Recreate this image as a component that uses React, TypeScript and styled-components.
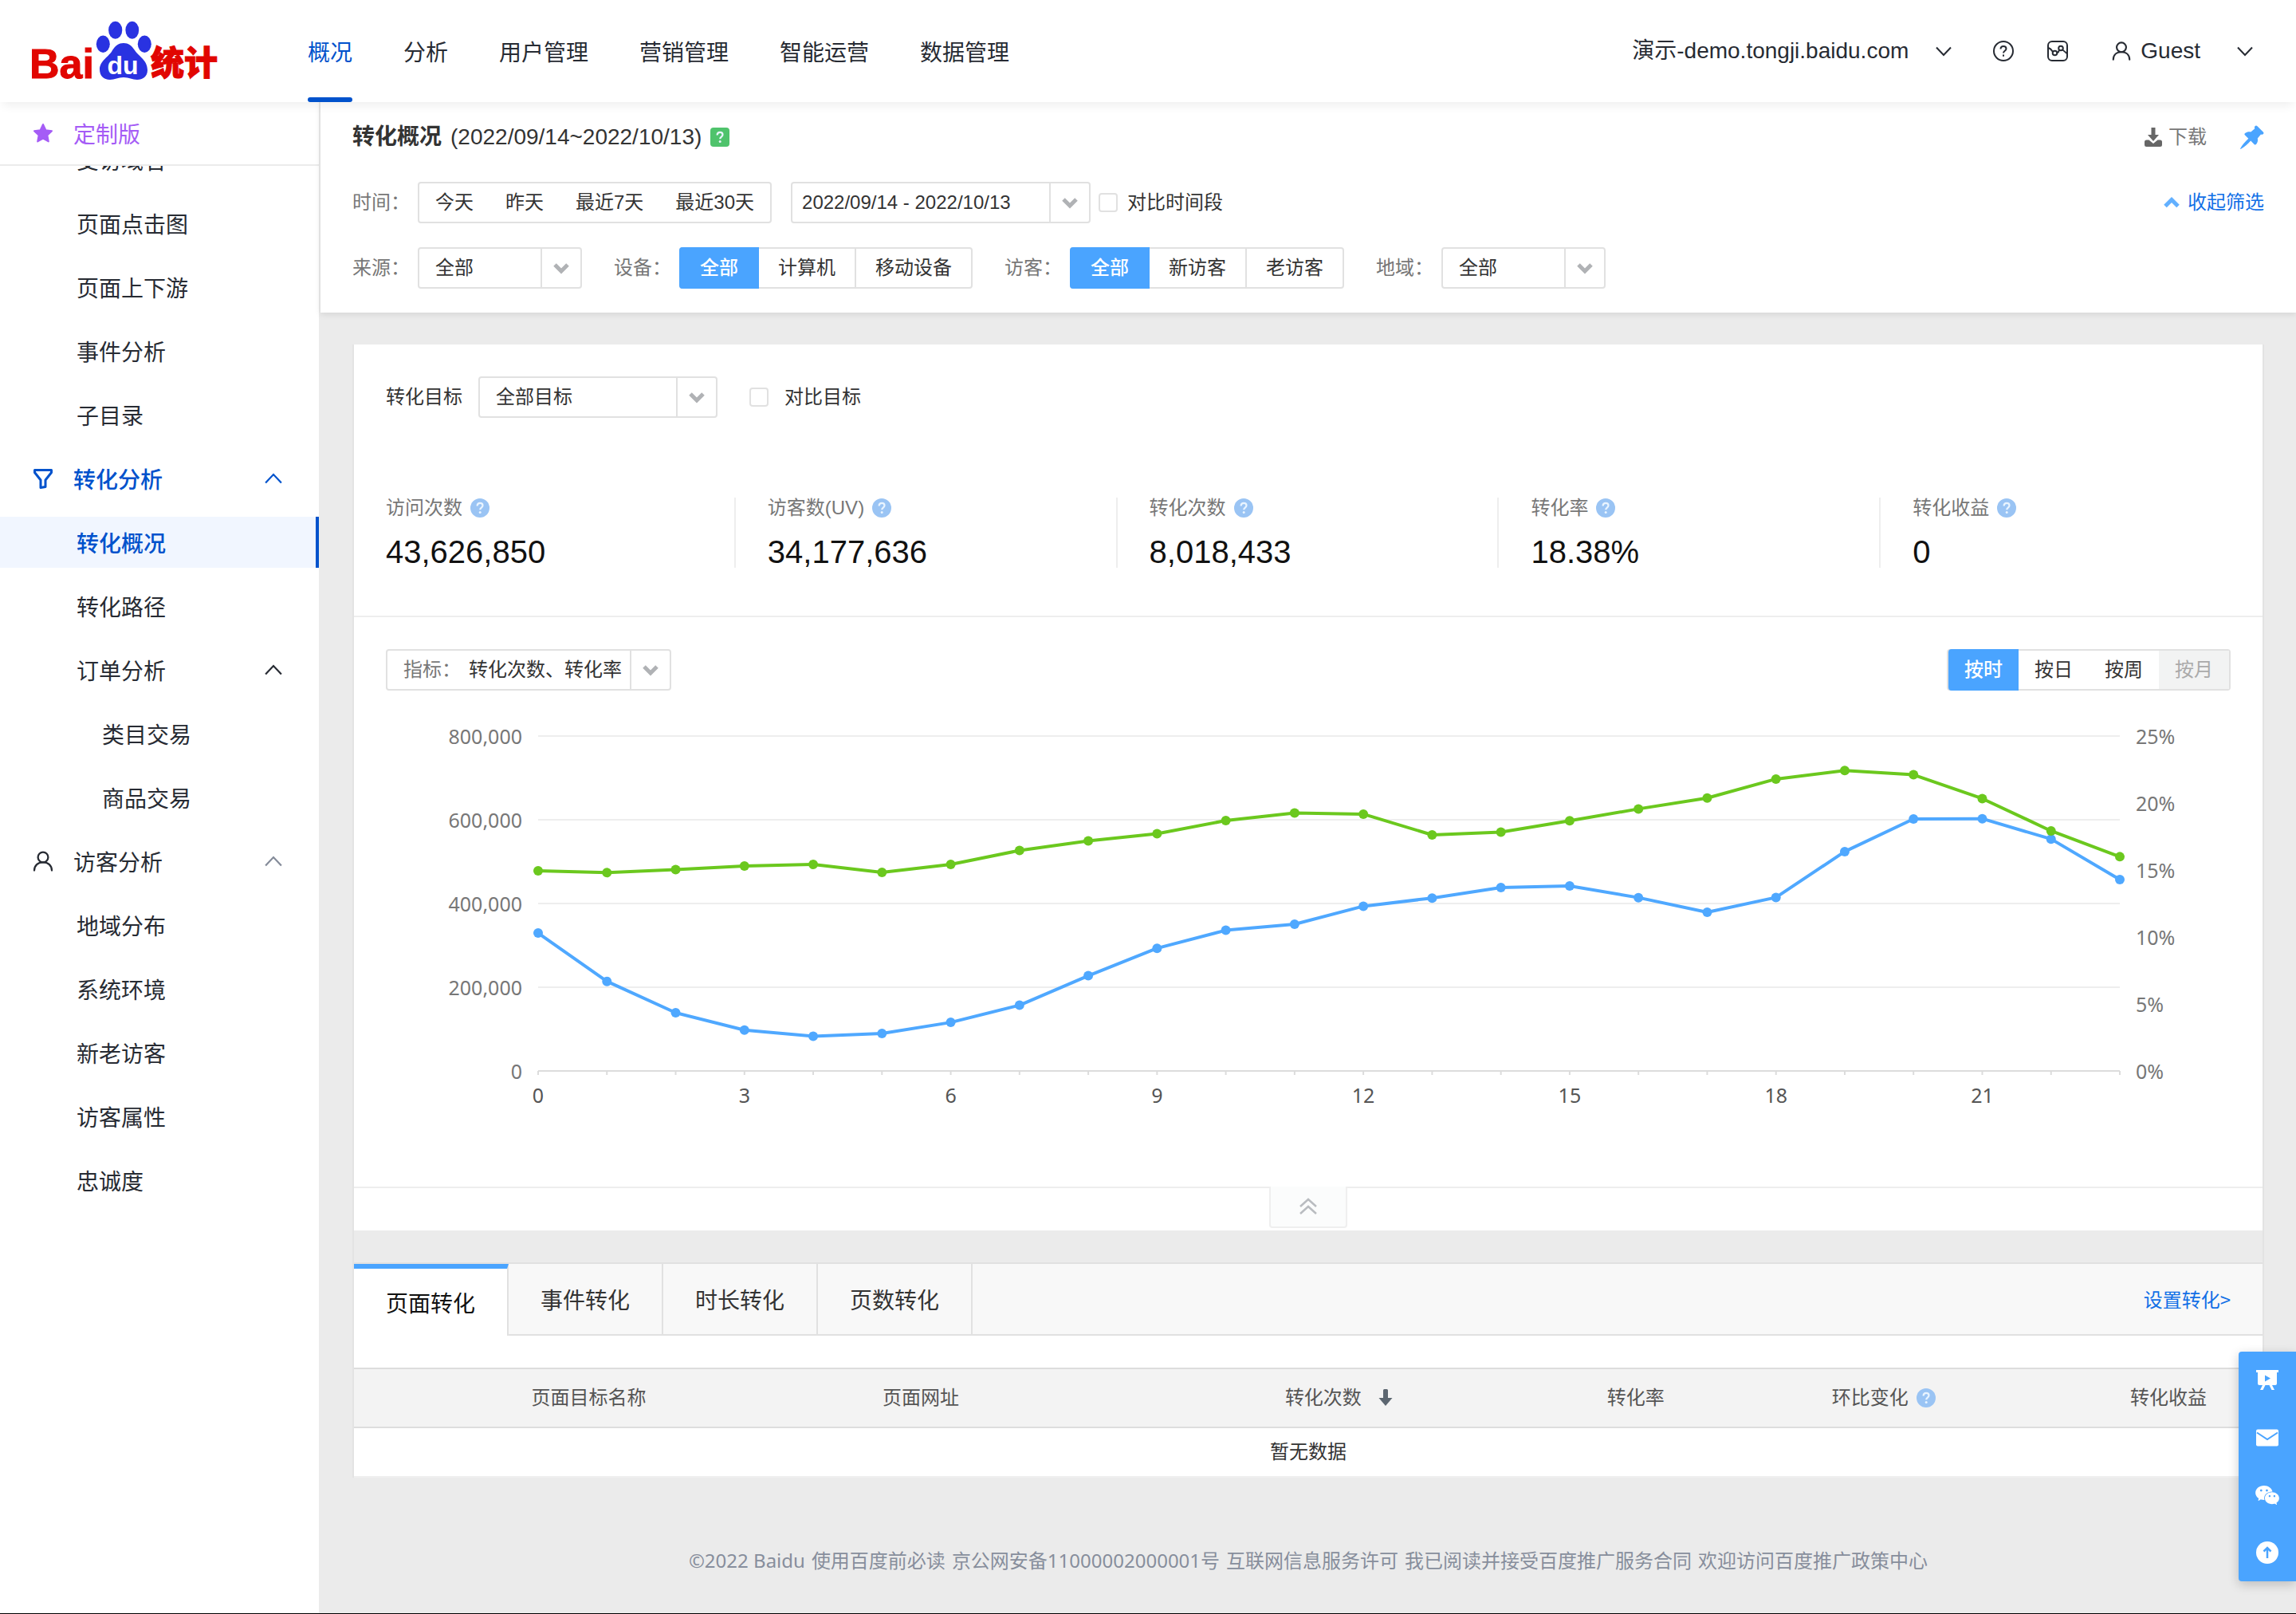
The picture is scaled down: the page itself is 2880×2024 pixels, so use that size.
import React, { useState } from "react";
import styled, { createGlobalStyle, css } from "styled-components";
import { AiFillWechat } from "react-icons/ai";

const c = {
  ink: "#272b33",
  text: "#333",
  muted: "#777",
  line: "#e1e1e1",
  hair: "#eee",
  blue: "#4aa4ff",
  navy: "#0052cc",
  link: "#116fe6",
  page: "#ebebeb",
};

const sans = `"Liberation Sans", "Noto Sans CJK SC", sans-serif`;
const hanzi = `"Noto Sans CJK SC", sans-serif`;
const humanist = `"Noto Sans", "Noto Sans CJK SC", sans-serif`;

const GlobalStyle = createGlobalStyle`
  *, *::before, *::after { box-sizing: border-box; }
  body {
    margin: 0;
    background: ${c.page};
    color: ${c.text};
    font: 24px/32px ${sans};
  }
  button, select, input { font: inherit; color: inherit; margin: 0; }
  button { padding: 0; border: 0; background: none; cursor: pointer; white-space: nowrap; }
  a { color: inherit; text-decoration: none; }
  ul { list-style: none; margin: 0; padding: 0; }
  svg { display: block; flex: none; }
`;

/* ---------- shell ---------- */

const Page = styled.div`
  min-height: 100vh;
  display: flex;
  flex-direction: column;
  border-bottom: 1px solid #000;
`;

const Header = styled.header`
  position: relative;
  z-index: 2;
  display: flex;
  align-items: stretch;
  height: 128px;
  padding: 0 54px 0 20px;
  background: #fff;
  color: ${c.ink};
  font-size: 28px;
  box-shadow: 0 8px 12px -4px rgba(0, 0, 0, 0.07);
`;

const LogoLink = styled.a`
  width: 366px;
  padding-top: 10px;
`;

const Nav = styled.nav`
  flex: 1;
  display: flex;
  gap: 64px;
  font-family: ${hanzi};
`;

const NavLink = styled.a<{ $active?: boolean }>`
  display: flex;
  flex-direction: column;
  line-height: 128px;
  white-space: nowrap;
  color: ${(p) => (p.$active ? c.navy : "inherit")};
  &::after {
    content: "";
    height: 6px;
    margin-top: -6px;
    border-radius: 3px;
    background: ${(p) => (p.$active ? c.navy : "transparent")};
  }
`;

const Tools = styled.div`
  display: flex;
  align-items: center;
`;

const SiteButton = styled.button`
  display: flex;
  align-items: center;
  gap: 34px;
  margin-right: 52px;
`;

const IconButton = styled.button`
  margin-right: 42px;
`;

const UserButton = styled.button`
  display: flex;
  align-items: center;
  gap: 11px;
  margin-left: 12px;
  & > span { margin-right: 35px; }
`;

const Body = styled.div`
  flex: 1;
  display: flex;
`;

/* ---------- sidebar ---------- */

const Sidebar = styled.aside`
  flex: none;
  width: 402px;
  border-right: 2px solid ${c.page};
  background: #fff;
  color: ${c.ink};
  font-family: ${hanzi};
  font-size: 28px;
`;

const CustomLink = styled.a`
  display: flex;
  align-items: center;
  gap: 24px;
  height: 80px;
  padding-left: 40px;
  border-bottom: 2px solid ${c.page};
  color: #a55cf6;
`;

const MenuViewport = styled.div`
  overflow: hidden;
`;

const Menu = styled.ul`
  display: grid;
  gap: 16px;
  margin-top: -40px;
`;

type Level = "group" | "item" | "sub";
const indent: Record<Level, number> = { group: 40, item: 96, sub: 128 };

const MenuLink = styled.a<{ $level: Level; $tone?: "open" | "current" }>`
  display: flex;
  align-items: center;
  gap: 24px;
  height: 64px;
  padding: 0 42px 0 ${(p) => indent[p.$level]}px;
  border-right: 4px solid transparent;
  & > span { flex: 1; }
  ${(p) =>
    p.$tone &&
    css`
      color: ${c.navy};
      font-weight: 500;
    `}
  ${(p) =>
    p.$tone === "current" &&
    css`
      background: #f1f6ff;
      border-right-color: ${c.navy};
    `}
`;

/* ---------- filters ---------- */

const Main = styled.main`
  flex: 1;
  min-width: 0;
`;

const Filters = styled.section`
  padding: 0 40px 30px;
  background: #fff;
  box-shadow: 0 2px 8px rgba(0, 0, 0, 0.1);
`;

const TitleRow = styled.div`
  display: flex;
  align-items: center;
  height: 88px;
  margin-bottom: 12px;
  font-size: 28px;
`;

const Title = styled.h1`
  flex: 1;
  display: flex;
  align-items: center;
  gap: 11px;
  margin: 0;
  font-size: 28px;
  font-weight: 400;
  & > strong { font-weight: 600; }
`;

const Download = styled.button`
  display: flex;
  align-items: center;
  gap: 8px;
  margin-right: 42px;
  color: ${c.muted};
  font-size: 24px;
`;

const FilterRow = styled.div`
  display: flex;
  flex-wrap: wrap;
  align-items: center;
  gap: 24px;
  & + & { margin-top: 30px; gap: 40px; }
`;

const Field = styled.div`
  display: flex;
  align-items: center;
  gap: 10px;
`;

const FieldLabel = styled.label`
  color: ${c.muted};
  white-space: nowrap;
`;

const frame = css`
  height: 52px;
  border: 2px solid ${c.line};
  border-radius: 4px;
  background: #fff;
`;

const QuickRange = styled.div`
  ${frame}
  display: flex;
  & > button { padding: 0 20px; }
`;

const Segments = styled.div`
  ${frame}
  display: flex;
  & > button { padding: 0 24px; }
  & > button + button + button { border-left: 2px solid ${c.line}; }
`;

const Periods = styled.div`
  ${frame}
  display: flex;
  & > button { padding: 0 20px; }
`;

const Segment = styled.button<{ $on?: boolean }>`
  ${(p) =>
    p.$on &&
    css`
      margin: -2px 0 -2px -2px;
      border: solid ${c.blue};
      border-width: 0 2px;
      border-radius: 4px 0 0 4px;
      background: ${c.blue};
      color: #fff;
      font-weight: 500;
    `}
  &:disabled {
    background: #f2f3f3;
    color: #aaa;
  }
`;

const Period = styled(Segment)`
  ${(p) => p.$on && css`border: 0; margin-left: 0;`}
`;

const Combo = styled.div<{ $width: number }>`
  ${frame}
  display: inline-grid;
  grid-template-columns: 1fr;
  width: ${(p) => p.$width}px;
  & > * { grid-area: 1 / 1; }
  & > select {
    appearance: none;
    width: 100%;
    padding: 0 50px 0 20px;
    border: 0;
    background: none;
  }
`;

const ComboArrow = styled.span`
  justify-self: end;
  display: grid;
  place-items: center;
  width: 50px;
  border-left: 2px solid ${c.line};
  pointer-events: none;
`;

const PickerButton = styled.button<{ $gap: number }>`
  ${frame}
  display: flex;
  align-items: stretch;
  padding-left: ${(p) => p.$gap}px;
  line-height: 48px;
  & > em { font-style: normal; color: ${c.muted}; margin-right: 10px; }
`;

const PickerText = styled.span<{ $width: number }>`
  width: ${(p) => p.$width}px;
  text-align: left;
`;

const RangeGroup = styled.div`
  display: flex;
  align-items: center;
  gap: 10px;
`;

const CheckLabel = styled.label<{ $gap: number }>`
  display: flex;
  align-items: center;
  gap: ${(p) => p.$gap}px;
  white-space: nowrap;
`;

const Checkbox = styled.input.attrs({ type: "checkbox" })`
  appearance: none;
  width: 24px;
  height: 24px;
  border: 2px solid ${c.line};
  border-radius: 4px;
  background: #fff;
  &:checked { background: ${c.blue}; border-color: ${c.blue}; }
`;

const CollapseFilters = styled.button`
  display: flex;
  align-items: center;
  gap: 10px;
  margin-left: auto;
  color: ${c.link};
`;

/* ---------- report ---------- */

const Report = styled.div`
  margin: 40px 40px 0;
  border: solid #e3e3e3;
  border-width: 0 2px;
`;

const Overview = styled.section`
  background: #fff;
`;

const GoalRow = styled.div`
  display: flex;
  align-items: center;
  gap: 20px;
  padding: 40px 40px 100px;
  & > label:last-child { margin-left: 20px; }
`;

const Stats = styled.div`
  display: grid;
  grid-template-columns: repeat(5, 1fr);
  padding-bottom: 60px;
  border-bottom: 2px solid ${c.hair};
`;

const Stat = styled.div`
  display: grid;
  gap: 22px;
  padding-left: 40px;
  border-right: 2px solid ${c.hair};
  &:last-child { border-right: 0; }
`;

const StatLabel = styled.div`
  display: flex;
  align-items: center;
  gap: 10px;
  height: 26px;
  color: ${c.muted};
`;

const StatValue = styled.div`
  color: #111;
  font-size: 40px;
  line-height: 40px;
`;

const ChartBar = styled.div`
  display: flex;
  justify-content: space-between;
  padding: 40px 40px 0;
`;

const ChartWrap = styled.div`
  padding: 0 40px;
  border-bottom: 2px solid ${c.hair};
  & > svg { width: 100%; height: auto; }
  & text { font: 25px ${humanist}; fill: ${c.muted}; }
  & text.hour { fill: #555; }
`;

const FoldStrip = styled.div`
  display: flex;
  justify-content: center;
  height: 53px;
`;

const FoldButton = styled.button`
  display: grid;
  place-items: center;
  width: 98px;
  height: 52px;
  margin-top: -2px;
  border: 2px solid #efefef;
  border-top: 0;
  border-radius: 0 0 4px 4px;
  background: #fbfcfc;
`;

const Tabs = styled.div`
  display: flex;
  height: 92px;
  margin-top: 40px;
  border: solid ${c.line};
  border-width: 2px 0;
  background: #f8f8f8;
  font-family: ${hanzi};
`;

const Tab = styled.button<{ $active?: boolean }>`
  padding: 0 40px;
  border-right: 2px solid ${c.line};
  font-size: 28px;
  ${(p) =>
    p.$active &&
    css`
      margin-bottom: -2px;
      border-top: 6px solid ${c.blue};
      background: #fff;
      color: #111;
    `}
`;

const SetupLink = styled.a`
  margin: auto 40px auto auto;
  color: ${c.link};
`;

const TableWrap = styled.div`
  padding-top: 40px;
  background: #fff;
`;

const Table = styled.table`
  width: 100%;
  table-layout: fixed;
  border-collapse: separate;
  border-spacing: 0;
  th {
    height: 76px;
    padding: 0 20px;
    border: solid #ddd;
    border-width: 2px 0;
    background: #f3f3f3;
    color: #555;
    font-weight: 400;
  }
  th:last-child { padding-right: 70px; }
  td {
    height: 62px;
    padding: 0;
    border-bottom: 2px solid #efefef;
    text-align: center;
  }
`;

const Head = styled.div<{ $end?: boolean }>`
  display: flex;
  align-items: center;
  justify-content: ${(p) => (p.$end ? "flex-end" : "center")};
  gap: ${(p) => (p.$end ? 10 : 0)}px;
`;

const SortButton = styled.button`
  display: flex;
  align-items: center;
  gap: 20px;
`;

const Footer = styled.footer`
  display: flex;
  flex-wrap: wrap;
  justify-content: center;
  gap: 8px;
  padding: 88px 40px 48px;
  color: #878e9c;
  font-family: ${humanist};
`;

const Dock = styled.div`
  position: fixed;
  z-index: 3;
  right: 0;
  bottom: 41px;
  width: 72px;
  border-radius: 4px 0 0 4px;
  background: ${c.blue};
  color: #fff;
  box-shadow: 0 4px 14px rgba(0, 0, 0, 0.2);
  & > button {
    display: grid;
    place-items: center;
    width: 72px;
    height: 72px;
  }
`;

/* ---------- icons ---------- */

const Chevron = ({ up, size = 20, color = "currentColor" }: { up?: boolean; size?: number; color?: string }) => (
  <svg width={size} height={size} viewBox="0 0 20 20" fill="none" stroke={color} strokeWidth="2" aria-hidden="true">
    <path d={up ? "M1 15 10 5.5 19 15" : "M1 5.5 10 15 19 5.5"} />
  </svg>
);

const Caret = ({ up, color = "#b0b2b5" }: { up?: boolean; color?: string }) => (
  <svg width="20" height="20" viewBox="0 0 20 20" fill="none" stroke={color} strokeWidth="5" aria-hidden="true">
    <path d={up ? "M2 14.5 10 6.5 18 14.5" : "M2 6 10 14 18 6"} />
  </svg>
);

const Hint = ({ square }: { square?: boolean }) => (
  <svg width="24" height="24" viewBox="0 0 24 24" aria-hidden="true">
    {square ? <rect width="24" height="24" rx="4" fill="#4fc36c" /> : <circle cx="12" cy="12" r="12" fill="#9ac4f4" />}
    <path d="M8.6 9.4c0-2.2 1.4-3.6 3.5-3.6s3.4 1.2 3.4 3.1c0 2.6-3.3 2.8-3.3 5.3" fill="none" stroke="#e9f4ff" strokeWidth="2.2" />
    <circle cx="12.2" cy="17.6" r="1.5" fill="#e9f4ff" />
  </svg>
);

const Person = ({ size }: { size: number }) => (
  <svg width={size} height={size} viewBox="0 0 28 28" fill="none" stroke="currentColor" strokeWidth="2.3" strokeLinecap="round" aria-hidden="true">
    <circle cx="14" cy="9" r="6.400" />
    <path d="M3 25.500C3.200 19.500 7.400 15.400 14 15.400s10.800 4.100 11 10.100" />
  </svg>
);

const Logo = () => (
  <svg width="270" height="110" viewBox="0 0 270 110" role="img" aria-label="Baidu 统计">
    <g fill="#2932e1">
      <ellipse cx="124.700" cy="27.700" rx="8.600" ry="11" />
      <ellipse cx="145.800" cy="27.700" rx="8.400" ry="11" />
      <ellipse cx="109.300" cy="45.300" rx="8.500" ry="10.700" />
      <ellipse cx="161.300" cy="45.300" rx="8.500" ry="10.700" />
      <path d="M135 44c6 0 10 3 14 9 4 7 16 12 16 25 0 8-6 12-13 12-6 0-10-3-17-3s-11 3-17 3c-8 0-13-5-13-13 0-11 12-16 16-24 4-6 8-9 14-9Z" />
    </g>
    <g fill="#e10601" stroke="#e10601" strokeWidth="1" fontWeight="700">
      <text x="17" y="88" fontSize="52" fontFamily="Liberation Sans, sans-serif">Bai</text>
      <text x="169" y="84" fontSize="42" fontWeight="900" fontFamily="Noto Sans CJK SC, sans-serif">统计</text>
    </g>
    <text x="134" y="83" textAnchor="middle" fill="#fff" fontSize="32" fontWeight="700" fontFamily="Liberation Sans, sans-serif">du</text>
  </svg>
);

/* ---------- chart ---------- */

const conversions = [329.5, 214, 139, 97.5, 83, 89.5, 116, 157, 227.5, 293, 336, 350.5, 393.5, 413, 438, 442, 414, 379, 414.5, 524, 602, 602.5, 554, 457];
const rates = [14.94, 14.8, 15.03, 15.3, 15.42, 14.82, 15.42, 16.46, 17.17, 17.71, 18.69, 19.26, 19.17, 17.62, 17.83, 18.67, 19.56, 20.37, 21.79, 22.43, 22.11, 20.33, 17.92, 15.99];

const plot = { left: 191, right: 2175, top: 57, bottom: 477 };
const px = (i: number) => plot.left + (i * (plot.right - plot.left)) / 23;
const py = (v: number, max: number) => plot.bottom - (v / max) * (plot.bottom - plot.top);

const Series = ({ data, max, color }: { data: number[]; max: number; color: string }) => (
  <g>
    <polyline points={data.map((v, i) => `${px(i)},${py(v, max)}`).join(" ")} fill="none" stroke={color} strokeWidth="4" strokeLinejoin="round" />
    {data.map((v, i) => (
      <circle key={i} cx={px(i)} cy={py(v, max)} r="6" fill={color} />
    ))}
  </g>
);

const TrendChart = () => (
  <svg viewBox="0 0 2314 622" role="img" aria-label="转化次数、转化率">
    {[800, 600, 400, 200, 0].map((v) => (
      <g key={v}>
        <line x1={plot.left} x2={plot.right} y1={py(v, 800)} y2={py(v, 800)} stroke={v ? "#eee" : "#dcdcdc"} strokeWidth="2" />
        <text x={171} y={py(v, 800) + 10} textAnchor="end">{v ? `${v},000` : "0"}</text>
      </g>
    ))}
    {[25, 20, 15, 10, 5, 0].map((v) => (
      <text key={v} x={2195} y={py(v, 25) + 10}>{v}%</text>
    ))}
    {conversions.map((_, i) => (
      <line key={i} x1={px(i)} x2={px(i)} y1={plot.bottom} y2={plot.bottom + 5} stroke="#dcdcdc" strokeWidth="2" />
    ))}
    {[0, 3, 6, 9, 12, 15, 18, 21].map((h) => (
      <text key={h} className="hour" x={px(h)} y={517} textAnchor="middle">{h}</text>
    ))}
    <Series data={conversions} max={800} color="#4fa8ff" />
    <Series data={rates} max={25} color="#6bc81e" />
  </svg>
);

/* ---------- content ---------- */

const navItems = ["概况", "分析", "用户管理", "营销管理", "智能运营", "数据管理"];

type Entry = { text: string; level: Level; icon?: React.ReactNode; tone?: "open" | "current"; arrow?: string };

const Funnel = (
  <svg width="28" height="28" viewBox="0 0 28 28" fill="none" stroke="currentColor" strokeWidth="3" strokeLinejoin="round" aria-hidden="true">
    <path d="M3.500 3.500h21v3L17 16v8.500l-6 1V16L3.500 6.500Z" />
  </svg>
);

const entries: Entry[] = [
  { text: "受访域名", level: "item" },
  { text: "页面点击图", level: "item" },
  { text: "页面上下游", level: "item" },
  { text: "事件分析", level: "item" },
  { text: "子目录", level: "item" },
  { text: "转化分析", level: "group", icon: Funnel, tone: "open", arrow: c.navy },
  { text: "转化概况", level: "item", tone: "current" },
  { text: "转化路径", level: "item" },
  { text: "订单分析", level: "item", arrow: c.ink },
  { text: "类目交易", level: "sub" },
  { text: "商品交易", level: "sub" },
  { text: "访客分析", level: "group", icon: <Person size={28} />, arrow: "#848b99" },
  { text: "地域分布", level: "item" },
  { text: "系统环境", level: "item" },
  { text: "新老访客", level: "item" },
  { text: "访客属性", level: "item" },
  { text: "忠诚度", level: "item" },
];

const stats = [
  ["访问次数", "43,626,850"],
  ["访客数(UV)", "34,177,636"],
  ["转化次数", "8,018,433"],
  ["转化率", "18.38%"],
  ["转化收益", "0"],
];

const footerLinks = ["使用百度前必读", "京公网安备11000002000001号", "互联网信息服务许可", "我已阅读并接受百度推广服务合同", "欢迎访问百度推广政策中心"];

const DropDown = ({ id, width, value }: { id: string; width: number; value: string }) => (
  <Combo $width={width}>
    <select id={id} defaultValue={value}>
      <option>{value}</option>
    </select>
    <ComboArrow><Caret /></ComboArrow>
  </Combo>
);

const Choice = ({ options }: { options: string[] }) => {
  const [on, setOn] = useState(0);
  return (
    <Segments>
      {options.map((o, i) => (
        <Segment key={o} type="button" $on={i === on} aria-pressed={i === on} onClick={() => setOn(i)}>{o}</Segment>
      ))}
    </Segments>
  );
};

export default function App() {
  const [tab, setTab] = useState("页面转化");
  return (
    <Page>
      <GlobalStyle />
      <Header>
        <LogoLink href="#"><Logo /></LogoLink>
        <Nav>
          {navItems.map((n, i) => (
            <NavLink key={n} href="#" $active={i === 0}>{n}</NavLink>
          ))}
        </Nav>
        <Tools>
          <SiteButton type="button">演示-demo.tongji.baidu.com <Chevron /></SiteButton>
          <IconButton type="button" aria-label="帮助">
            <svg width="26" height="26" viewBox="0 0 26 26" fill="none" stroke="currentColor" strokeWidth="2">
              <circle cx="13" cy="13" r="12" />
              <path d="M9.500 10.500C9.500 8.400 11 7 13 7s3.500 1.300 3.500 3.200c0 2.500-3.500 2.700-3.500 5.300" />
              <path d="M13 17.500v2.300" />
            </svg>
          </IconButton>
          <IconButton type="button" aria-label="数据监控">
            <svg width="26" height="26" viewBox="0 0 26 26" fill="none" stroke="currentColor" strokeWidth="2">
              <rect x="1" y="1" width="24" height="24" rx="5" />
              <circle cx="9.500" cy="15.500" r="2.800" />
              <circle cx="17" cy="9.500" r="2.800" />
              <path d="M1.500 9c2 .6 3.600 2 5.300 4.800M12.300 15.300c1.600-.6 2.400-1.600 2.700-3.600M19 11.500c1.600.9 2.900 2.100 5.500 4.500" />
            </svg>
          </IconButton>
          <UserButton type="button"><Person size={26} /><span>Guest</span><Chevron /></UserButton>
        </Tools>
      </Header>

      <Body>
        <Sidebar>
          <CustomLink href="#">
            <svg width="28" height="28" viewBox="-1 -1 28 28" fill="currentColor" stroke="currentColor" strokeWidth="2" strokeLinejoin="round" aria-hidden="true">
              <path d="m13 2 3.400 7.200 7.600 1-5.600 5.400 1.400 7.800L13 19.600l-6.800 3.800 1.400-7.800L2 10.200l7.600-1Z" />
            </svg>
            定制版
          </CustomLink>
          <MenuViewport>
            <Menu>
              {entries.map((e) => (
                <li key={e.text}>
                  <MenuLink href="#" $level={e.level} $tone={e.tone}>
                    {e.icon}
                    <span>{e.text}</span>
                    {e.arrow && <Chevron up size={22} color={e.arrow} />}
                  </MenuLink>
                </li>
              ))}
            </Menu>
          </MenuViewport>
        </Sidebar>

        <Main>
          <Filters>
            <TitleRow>
              <Title><strong>转化概况</strong><span>(2022/09/14~2022/10/13)</span><Hint square /></Title>
              <Download type="button">
                <svg width="22" height="24" viewBox="0 0 22 24" fill="#666" aria-hidden="true">
                  <path d="M8.500 0h5v9h4.500l-7 8-7-8h4.500Z" />
                  <path d="M2.500 15.500h3l5.500 4.500 5.500-4.500h3a2.500 2.500 0 0 1 2.500 2.500v3.500a2.500 2.500 0 0 1-2.500 2.500h-17A2.500 2.500 0 0 1 0 21.500V18a2.500 2.500 0 0 1 2.500-2.500Z" />
                </svg>
                下载
              </Download>
              <button type="button" aria-label="固定筛选">
                <svg width="30" height="30" viewBox="0 0 30 30" fill={c.blue} aria-hidden="true">
                  <path d="M18.500 1.200c1-1 2-1 3 0l7.300 7.300c1 1 .8 2-.2 2.800-1 .6-1.800.6-2.600.3l-4.200 5c.6 2.600.2 5-1.600 7.200-.8 1-1.800 1-2.600.1l-4.400-4.400C9.500 23.500 5.500 27.500.6 30L0 29.400c2.500-4.900 6.300-8.900 10.300-12.700L6 12.400c-.9-.8-.8-1.800.2-2.500 2.200-1.700 4.600-2 7.100-1.500l5-4.200c-.4-1-.5-2 .2-3Z" />
                </svg>
              </button>
            </TitleRow>
            <FilterRow>
              <Field>
                <FieldLabel as="span">时间：</FieldLabel>
                <QuickRange>
                  {["今天", "昨天", "最近7天", "最近30天"].map((r) => (
                    <button key={r} type="button">{r}</button>
                  ))}
                </QuickRange>
              </Field>
              <RangeGroup>
                <PickerButton type="button" $gap={12}>
                  <PickerText $width={310}>2022/09/14 - 2022/10/13</PickerText>
                  <ComboArrow><Caret /></ComboArrow>
                </PickerButton>
                <CheckLabel $gap={12}><Checkbox />对比时间段</CheckLabel>
              </RangeGroup>
              <CollapseFilters type="button"><Caret up color="#62b0ff" />收起筛选</CollapseFilters>
            </FilterRow>
            <FilterRow>
              <Field>
                <FieldLabel htmlFor="source">来源：</FieldLabel>
                <DropDown id="source" width={206} value="全部" />
              </Field>
              <Field>
                <FieldLabel as="span">设备：</FieldLabel>
                <Choice options={["全部", "计算机", "移动设备"]} />
              </Field>
              <Field>
                <FieldLabel as="span">访客：</FieldLabel>
                <Choice options={["全部", "新访客", "老访客"]} />
              </Field>
              <Field>
                <FieldLabel htmlFor="region">地域：</FieldLabel>
                <DropDown id="region" width={206} value="全部" />
              </Field>
            </FilterRow>
          </Filters>

          <Report>
            <Overview>
              <GoalRow>
                <label htmlFor="goal">转化目标</label>
                <DropDown id="goal" width={300} value="全部目标" />
                <CheckLabel $gap={20}><Checkbox />对比目标</CheckLabel>
              </GoalRow>
              <Stats>
                {stats.map(([label, value]) => (
                  <Stat key={label}>
                    <StatLabel>{label}<Hint /></StatLabel>
                    <StatValue>{value}</StatValue>
                  </Stat>
                ))}
              </Stats>
              <ChartBar>
                <PickerButton type="button" $gap={20}>
                  <em>指标：</em>
                  <PickerText $width={202}>转化次数、转化率</PickerText>
                  <ComboArrow><Caret /></ComboArrow>
                </PickerButton>
                <Periods>
                  <Period type="button" $on>按时</Period>
                  <Period type="button">按日</Period>
                  <Period type="button">按周</Period>
                  <Period type="button" disabled>按月</Period>
                </Periods>
              </ChartBar>
              <ChartWrap><TrendChart /></ChartWrap>
              <FoldStrip>
                <FoldButton type="button" aria-label="收起图表">
                  <svg width="24" height="24" viewBox="0 0 24 24" fill="none" stroke="#b9bcc0" strokeWidth="2.500">
                    <path d="M2 12 12 3l10 9M2 21l10-9 10 9" />
                  </svg>
                </FoldButton>
              </FoldStrip>
            </Overview>

            <Tabs>
              {["页面转化", "事件转化", "时长转化", "页数转化"].map((t) => (
                <Tab key={t} type="button" $active={t === tab} onClick={() => setTab(t)}>{t}</Tab>
              ))}
              <SetupLink href="#">设置转化&gt;</SetupLink>
            </Tabs>
            <TableWrap>
              <Table>
                <colgroup>
                  <col style={{ width: "24.6%" }} />
                  <col style={{ width: "10.2%" }} />
                  <col style={{ width: "20.5%" }} />
                  <col style={{ width: "14.2%" }} />
                  <col style={{ width: "14.2%" }} />
                  <col />
                </colgroup>
                <thead>
                  <tr>
                    <th><Head>页面目标名称</Head></th>
                    <th><Head>页面网址</Head></th>
                    <th>
                      <Head $end>
                        <SortButton type="button">
                          转化次数
                          <svg width="20" height="22" viewBox="0 0 20 22" fill="#5c6670" aria-hidden="true">
                            <path d="M7 1.500a1.500 1.500 0 0 1 1.500-1.500h3A1.500 1.500 0 0 1 13 1.500V11h5.500L10 21 1.500 11H7Z" />
                          </svg>
                        </SortButton>
                      </Head>
                    </th>
                    <th><Head $end>转化率</Head></th>
                    <th><Head $end>环比变化<Hint /></Head></th>
                    <th><Head $end>转化收益</Head></th>
                  </tr>
                </thead>
                <tbody>
                  <tr><td colSpan={6}>暂无数据</td></tr>
                </tbody>
              </Table>
            </TableWrap>
          </Report>

          <Footer>
            <span>©2022 Baidu</span>
            {footerLinks.map((f) => (
              <a key={f} href="#">{f}</a>
            ))}
          </Footer>
        </Main>
      </Body>

      <Dock>
        <button type="button" aria-label="视频教程">
          <svg width="30" height="26" viewBox="0 0 30 26" aria-hidden="true">
            <path fill="#fff" d="M1 0h28v3h-2v14a2 2 0 0 1-2 2h-4l3 6h-3.500l-3-6h-5l-3 6H6l3-6H5a2 2 0 0 1-2-2V3H1Z" />
            <path fill={c.blue} d="M12 6.500 19 10.500 12 14.500Z" />
          </svg>
        </button>
        <button type="button" aria-label="邮件">
          <svg width="28" height="22" viewBox="0 0 28 22" aria-hidden="true">
            <rect width="28" height="21" y=".5" rx="2" fill="#fff" />
            <path d="M1 4.500 14 13 27 4.500" fill="none" stroke={c.blue} strokeWidth="2" />
          </svg>
        </button>
        <button type="button" aria-label="微信"><AiFillWechat size={34} /></button>
        <button type="button" aria-label="返回顶部">
          <svg width="28" height="28" viewBox="0 0 28 28" aria-hidden="true">
            <circle cx="14" cy="14" r="14" fill="#fff" />
            <path d="M14 21V8M9.500 12.500 14 8l4.500 4.500" fill="none" stroke={c.blue} strokeWidth="2.500" />
          </svg>
        </button>
      </Dock>
    </Page>
  );
}
